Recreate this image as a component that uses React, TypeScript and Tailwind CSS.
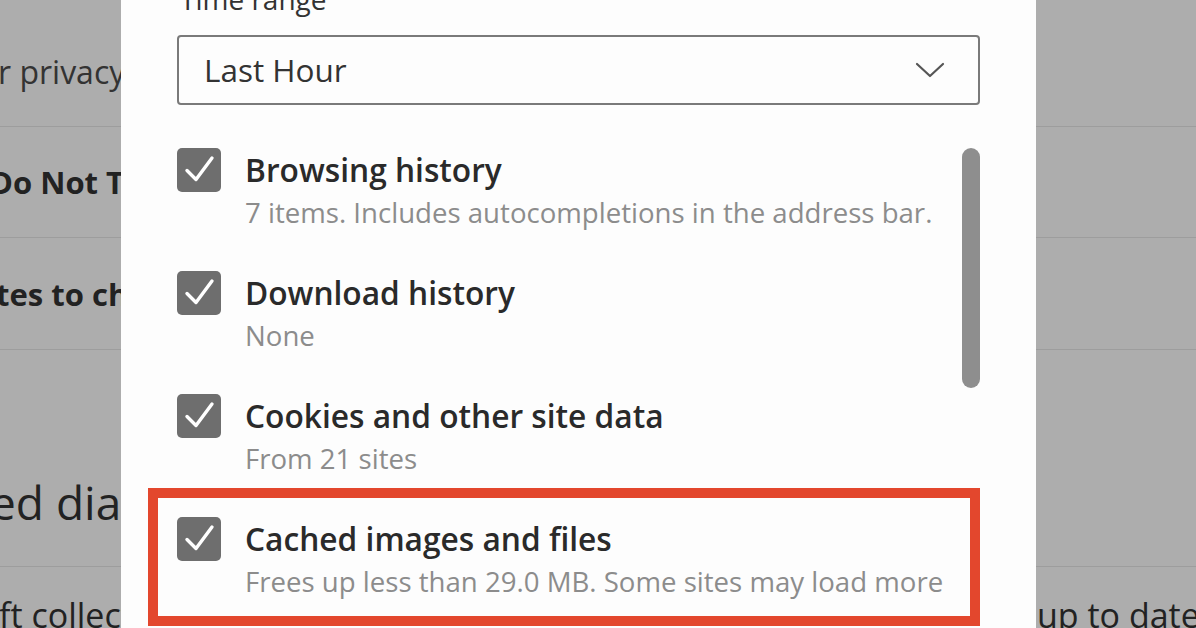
import React from "react";

const FONT = { fontFamily: '"Open Sans", "Liberation Sans", sans-serif' };

function Check() {
  return (
    <div className="flex h-[44px] w-[44px] shrink-0 items-center justify-center rounded-[5px] bg-[#6e6e6e]">
      <svg width="44" height="44" viewBox="0 0 44 44" fill="none">
        <path d="M10 22.5 L19 31.5 L35 10" stroke="#ffffff" strokeWidth="3.4" strokeLinecap="round" strokeLinejoin="round" />
      </svg>
    </div>
  );
}

function Item({ title, sub }: { title: string; sub: string }) {
  return (
    <div className="flex gap-[24px]">
      <Check />
      <div className="flex flex-col">
        <div className="whitespace-nowrap text-[31.7px] font-semibold leading-[44px] text-[#2a2a2a]">{title}</div>
        <div className="whitespace-nowrap text-[27.6px] leading-[40px] text-[#8c8c8c]">{sub}</div>
      </div>
    </div>
  );
}

function BgColumn({ children, last }: { children?: React.ReactNode[]; last?: React.ReactNode }) {
  const c = children || [];
  return (
    <div className="flex h-full flex-col overflow-hidden">
      <div className="flex h-[127px] shrink-0 items-center border-b border-[#9d9d9d] pt-[18px]">{c[0]}</div>
      <div className="flex h-[111px] shrink-0 items-center border-b border-[#9d9d9d]">{c[1]}</div>
      <div className="flex h-[112px] shrink-0 items-center border-b border-[#9d9d9d]">{c[2]}</div>
      <div className="flex h-[217px] shrink-0 items-end border-b border-[#9d9d9d] pb-[38px]">{c[3]}</div>
      <div className="flex flex-1 items-start pt-[29px]">{last}</div>
    </div>
  );
}

export default function App() {
  return (
    <div className="flex h-[628px] w-[1196px] overflow-hidden bg-[#adadad]" style={FONT}>
      <div className="w-[121px] shrink-0 overflow-hidden">
        <BgColumn
          last={<span className="ml-[-1px] whitespace-nowrap text-[34px] font-medium leading-[38px] text-[#222]">ft collects required diagnostic data</span>}
        >
          {[
            <span key="a" className="ml-[-2px] whitespace-nowrap text-[32px] leading-[36px] text-[#333]">r privacy settings</span>,
            <span key="b" className="ml-[-10px] whitespace-nowrap text-[31px] font-bold leading-[36px] text-[#222]">Do Not Track requests</span>,
            <span key="c" className="ml-[-4px] whitespace-nowrap text-[31px] font-bold leading-[36px] text-[#222]">tes to check payment</span>,
            <span key="d" className="ml-[-10px] whitespace-nowrap text-[46px] leading-[52px] text-[#222]">ed diagnostic data</span>,
          ]}
        </BgColumn>
      </div>

      <div className="flex w-[915px] shrink-0 flex-col bg-[#fdfdfd] px-[56px]">
        <div className="-mt-[18px] whitespace-nowrap pl-[3px] text-[28px] leading-[34px] text-[#333]">Time range</div>
        <div className="mt-[19px] flex h-[70px] items-center justify-between rounded-[4px] border-2 border-[#7a7a7a] pl-[25px] pr-[33px]">
          <span className="text-[31.5px] leading-none text-[#333]">Last Hour</span>
          <svg width="30" height="18" viewBox="0 0 30 18" fill="none">
            <path d="M2 3 L15 15 L28 3" stroke="#555" strokeWidth="2.2" strokeLinecap="round" strokeLinejoin="round" />
          </svg>
        </div>
        <div className="relative mt-[43px] flex flex-col gap-[39px]">
          <div className="absolute right-0 top-0 h-[240px] w-[18px] rounded-full bg-[#8e8e8e]" />
          <Item title="Browsing history" sub="7 items. Includes autocompletions in the address bar." />
          <Item title="Download history" sub="None" />
          <Item title="Cookies and other site data" sub="From 21 sites" />
          <div className="-mt-[29px] ml-[-29px] border-[10px] border-[#e3472d] pb-[15px] pl-[19px] pt-[19px]">
            <Item title="Cached images and files" sub="Frees up less than 29.0 MB. Some sites may load more" />
          </div>
        </div>
      </div>

      <div className="flex-1 overflow-hidden">
        <BgColumn
          last={<span className="ml-[1px] whitespace-nowrap text-[34px] font-medium leading-[38px] text-[#222]">up to date, and performing</span>}
        />
      </div>
    </div>
  );
}
